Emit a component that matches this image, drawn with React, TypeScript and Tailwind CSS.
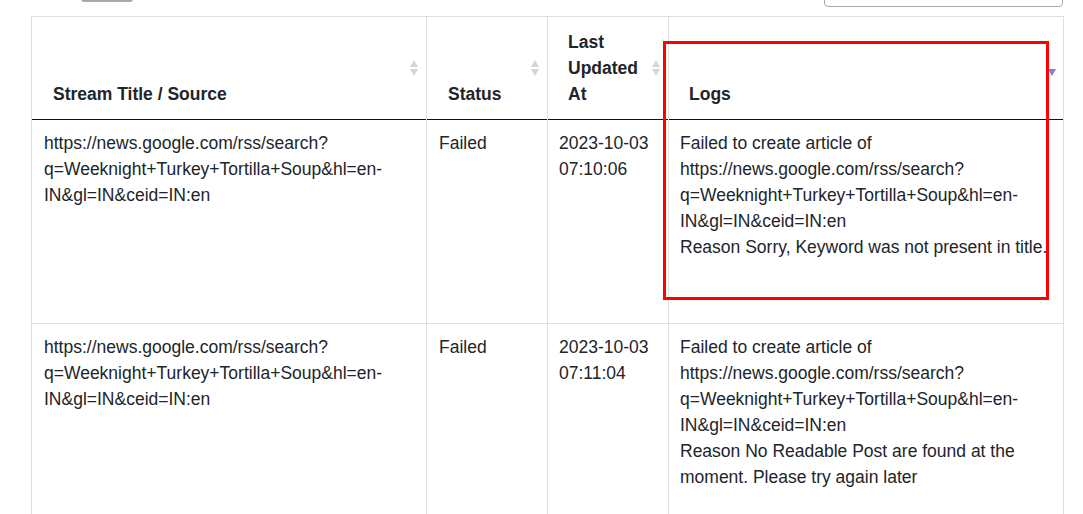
const url =
  "https://news.google.com/rss/search?q=Weeknight+Turkey+Tortilla+Soup&hl=en-IN&gl=IN&ceid=IN:en";

const rows = [
  {
    source: url,
    status: "Failed",
    date: "2023-10-03",
    time: "07:10:06",
    reason: "Reason Sorry, Keyword was not present in title.",
  },
  {
    source: url,
    status: "Failed",
    date: "2023-10-03",
    time: "07:11:04",
    reason: "Reason No Readable Post are found at the moment. Please try again later",
  },
];

function SortBoth() {
  return (
    <span className="absolute right-[8px] top-[43px] flex flex-col items-center gap-[2px]">
      <span className="h-0 w-0 border-x-[4px] border-b-[7px] border-x-transparent border-b-[#d5d5d5]" />
      <span className="h-0 w-0 border-x-[4px] border-t-[7px] border-x-transparent border-t-[#d5d5d5]" />
    </span>
  );
}

function SortDesc() {
  return (
    <span className="absolute right-[7px] top-[52px] h-0 w-0 border-x-[4px] border-t-[7px] border-x-transparent border-t-[#8080d0]" />
  );
}

export default function App() {
  return (
    <div
      className="relative h-[514px] w-[1083px] overflow-hidden bg-white text-[17.5px] leading-[26px] text-[#212529]"
      style={{ fontFamily: '"Liberation Sans", Arial, sans-serif' }}
    >
      <div className="flex h-[16px] items-start justify-between pl-[81px] pr-[20px]">
        <div className="-mt-[10px] h-[12px] w-[52px] rounded-b-[3px] border-b-2 border-[#a8a8a8] bg-[#f0f0f0]" />
        <div className="-mt-[20px] h-[27px] w-[239px] rounded-[4px] border border-[#aaaaaa]" />
      </div>

      <div className="pl-[31px]">
        <table className="w-[1032px] table-fixed border-collapse">
          <colgroup>
            <col className="w-[395px]" />
            <col className="w-[121px]" />
            <col className="w-[121px]" />
            <col className="w-[395px]" />
          </colgroup>
          <thead>
            <tr className="h-[103px] border-b border-b-[#111111]">
              <th className="relative border-x border-t border-[#dedede] pb-[12px] pl-[21px] pr-[28px] text-left align-bottom font-bold">
                Stream Title / Source
                <SortBoth />
              </th>
              <th className="relative border-x border-t border-[#dedede] pb-[12px] pl-[21px] pr-[28px] text-left align-bottom font-bold">
                Status
                <SortBoth />
              </th>
              <th className="relative border-x border-t border-[#dedede] pb-[12px] pl-[20px] pr-[18px] text-left align-bottom font-bold">
                Last Updated At
                <SortBoth />
              </th>
              <th className="relative border-x border-t border-[#dedede] pb-[12px] pl-[20px] pr-[28px] text-left align-bottom font-bold">
                Logs
                <SortDesc />
              </th>
            </tr>
          </thead>
          <tbody>
            {rows.map((r, i) => (
              <tr key={i} className="h-[204px] border-b border-[#dedede]">
                <td className="break-words border-x border-[#dedede] pl-[12px] pr-[12px] pt-[10px] align-top">
                  {r.source}
                </td>
                <td className="border-x border-[#dedede] pl-[12px] pr-[12px] pt-[10px] align-top">
                  {r.status}
                </td>
                <td className="border-x border-[#dedede] pl-[11px] pr-[4px] pt-[10px] align-top">
                  {r.date}
                  <br />
                  {r.time}
                </td>
                <td className="border-x border-[#dedede] pl-[11px] pr-[8px] pt-[10px] align-top">
                  Failed to create article of {r.source}
                  <br />
                  {r.reason}
                </td>
              </tr>
            ))}
          </tbody>
        </table>
      </div>

      <div className="absolute left-[663px] top-[41px] h-[259px] w-[386px] border-[3px] border-[#ff0000]" />
    </div>
  );
}
